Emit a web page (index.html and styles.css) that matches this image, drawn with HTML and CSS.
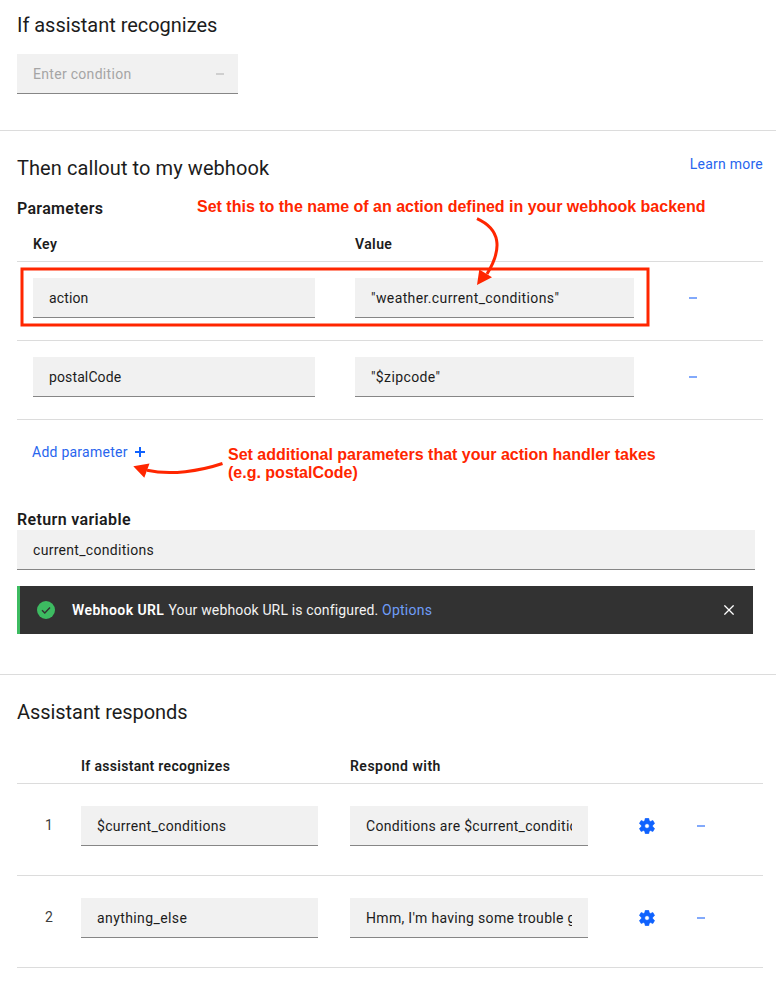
FILE: index.html
```html
<!DOCTYPE html>
<html lang="en">
<head>
<meta charset="utf-8">
<title>Webhook callout</title>
<link rel="stylesheet" href="styles.css">
</head>
<body>
<main class="panel">
  <section class="section condition">
    <h2 class="title">If assistant recognizes</h2>
    <div class="field field-condition"><span class="text placeholder">Enter condition</span><i class="minus minus-muted"></i></div>
  </section>

  <section class="section callout">
    <header class="callout-head">
      <h2 class="title title-callout">Then callout to my webhook</h2>
      <a class="link learn">Learn more</a>
    </header>
    <h3 class="subtitle">Parameters</h3>
    <div class="params-row params-header"><span class="th th-key">Key</span><span class="th th-value">Value</span></div>
    <div class="params-row">
      <div class="field"><span class="text t-action">action</span></div>
      <div class="field"><span class="text t-weather">"weather.current_conditions"</span></div>
      <i class="minus"></i>
    </div>
    <div class="params-row">
      <div class="field"><span class="text t-postal">postalCode</span></div>
      <div class="field"><span class="text t-zip">"$zipcode"</span></div>
      <i class="minus"></i>
    </div>
    <a class="link add">Add parameter
      <svg width="10" height="10" viewBox="0 0 10 10"><path d="M5 0V10M0 5H10" stroke="#0f62fe" stroke-width="2"/></svg>
    </a>
    <h3 class="subtitle subtitle-return">Return variable</h3>
    <div class="field field-return"><span class="text">current_conditions</span></div>
    <div class="notice">
      <svg class="notice-icon" width="18" height="18" viewBox="0 0 18 18"><circle cx="9" cy="9" r="9" fill="#3dbb61"/><path d="M5 9.2L7.8 12L13 6.6" fill="none" stroke="#323232" stroke-width="1.4"/></svg>
      <p class="notice-text"><strong class="notice-title">Webhook URL</strong><span class="notice-body">Your webhook URL is configured.</span><a class="notice-link">Options</a></p>
      <svg class="notice-close" width="10" height="10" viewBox="0 0 10 10"><path d="M.4 .4L9.6 9.6M9.6 .4L.4 9.6" stroke="#fff" stroke-width="1.3"/></svg>
    </div>
  </section>

  <section class="section responses">
    <h2 class="title title-responds">Assistant responds</h2>
    <div class="resp-row resp-header"><span></span><span class="th">If assistant recognizes</span><span class="th th-respond">Respond with</span></div>
    <div class="resp-row">
      <span class="num">1</span>
      <div class="field"><span class="text">$current_conditions</span></div>
      <div class="field"><span class="text">Conditions are $current_conditions</span></div>
      <svg class="gear" width="16" height="16" viewBox="-8 -8 16 16"><use href="#gear-shape"/></svg>
      <i class="minus"></i>
    </div>
    <div class="resp-row">
      <span class="num">2</span>
      <div class="field"><span class="text t-else">anything_else</span></div>
      <div class="field"><span class="text t-hmm">Hmm, I'm having some trouble getting</span></div>
      <svg class="gear" width="16" height="16" viewBox="-8 -8 16 16"><use href="#gear-shape"/></svg>
      <i class="minus"></i>
    </div>
  </section>

  <svg class="marks" width="776" height="984" viewBox="0 0 776 984">
    <defs>
      <g id="gear-shape">
        <path fill="#0f62fe" stroke="#0f62fe" stroke-width=".6" stroke-linejoin="round" fill-rule="evenodd" d="M-1.7-7.7H1.7L2.3-5.300L3.500-4.600L5.900-5.500L7.600-2.500L5.700-.8V.8L7.600 2.500L5.900 5.500L3.500 4.600L2.300 5.300L1.700 7.700H-1.700L-2.300 5.300L-3.500 4.600L-5.900 5.500L-7.600 2.500L-5.700 .8V-.8L-7.600-2.500L-5.900-5.500L-3.500-4.600L-2.300-5.300ZM0-2.300A2.300 2.300 0 1 0 0 2.300A2.300 2.300 0 1 0 0-2.300Z"/>
      </g>
    </defs>
    <g fill="none" stroke="#ff2600" stroke-width="3">
      <rect x="22" y="269" width="626" height="56"/>
      <path d="M477 218.6C500 229 503 248 487 274"/>
      <path d="M147 470.3C171 475.500 200 471 222.500 463.500"/>
    </g>
    <path fill="#ff2600" d="M477 285L479.300 269.500L492 277.300ZM133.300 466.300L149.500 463.500L144.300 477.800Z"/>
  </svg>
  <p class="note note-action">Set this to the name of an action defined in your webhook backend</p>
  <p class="note note-params">Set additional parameters that your action handler takes<br>(e.g. postalCode)</p>
</main>
</body>
</html>
```
FILE: styles.css
```css
* { box-sizing: border-box; }

body {
  margin: 0;
  background: #fff;
  color: #1c1c1c;
  font: 400 14px/20px Roboto, "Liberation Sans", sans-serif;
  letter-spacing: .3px;
}

h2, h3, p { margin: 0; }

.panel { position: relative; width: 776px; height: 984px; overflow: hidden; }
.section { padding-left: 17px; padding-right: 13px; }
.condition { height: 131px; padding-top: 12px; border-bottom: 1px solid #dcdcdc; }
.callout { height: 544px; padding-top: 24px; border-bottom: 1px solid #dcdcdc; }
.responses { padding-top: 24px; }

.title { font-size: 20px; line-height: 26px; font-weight: 400; letter-spacing: -.03px; }
.title-callout { letter-spacing: .08px; }
.title-responds { letter-spacing: -.06px; }
.subtitle { font-size: 16px; line-height: 22px; font-weight: 600; letter-spacing: .3px; margin-top: 17px; }

.field {
  height: 40px;
  padding: 0 16px;
  display: flex;
  align-items: center;
  background: #f1f1f1;
  border-bottom: 1px solid #868686;
  min-width: 0;
}
.text { flex: 1; overflow: hidden; white-space: nowrap; padding-top: 1px; }
.placeholder { color: #a5a5a5; }
.field-condition { width: 221px; margin-top: 16px; padding-right: 14px; }
.field-return { width: 738px; }

.minus { width: 8px; height: 2px; background: #82a9fb; }
.minus-muted { background: #cfcfcf; }

.link { color: #2865ee; }
.callout-head { display: flex; justify-content: space-between; }
.learn { margin-top: -1px; letter-spacing: .25px; }

.params-row {
  display: grid;
  grid-template-columns: 282px 279px 8px;
  column-gap: 40px;
  padding: 16px 0 0 16px;
  height: 79px;
  border-bottom: 1px solid #dcdcdc;
}
.params-row > .minus { margin: 19px 0 0 15px; }
.params-header { height: 42px; padding-top: 14px; }
.th { font-weight: 600; letter-spacing: .3px; }
.th-key, .th-value { letter-spacing: .4px; }
.th-respond { letter-spacing: .48px; }
.t-action, .t-postal { letter-spacing: .12px; }
.t-weather, .t-zip { letter-spacing: .38px; }
.t-else { letter-spacing: .4px; }
.t-hmm { letter-spacing: .31px; }

.add { display: flex; align-items: center; gap: 7px; margin: 22px 0 0 15px; letter-spacing: .25px; }
.subtitle-return { margin-top: 47px; margin-bottom: -1px; letter-spacing: .36px; }

.notice {
  width: 736px;
  height: 48px;
  margin-top: 16px;
  padding: 0 19px 0 17px;
  display: flex;
  align-items: center;
  background: #323232;
  border-left: 3px solid #3dbb61;
  color: #f3f3f3;
}
.notice-text { flex: 1; margin-left: 17px; display: flex; }
.notice-title { width: 96.500px; font-weight: 600; letter-spacing: .42px; color: #fff; }
.notice-body { width: 213.500px; letter-spacing: .15px; white-space: nowrap; }
.notice-link { color: #6f9df8; letter-spacing: .25px; }

.resp-row {
  display: grid;
  grid-template-columns: 64px 237px 32px 238px 51px 16px 42px 8px;
  padding-top: 22px;
  height: 92px;
  border-bottom: 1px solid #dcdcdc;
}
.resp-row > :nth-child(3) { grid-column: 4; }
.resp-row > .gear { grid-column: 6; margin-top: 12px; }
.resp-row > .minus { grid-column: 8; margin-top: 19px; }
.resp-header { height: 45px; margin-top: 14px; padding-top: 17px; }
.num { padding: 9px 0 0 28px; color: #3d3d3d; }

.marks { position: absolute; left: 0; top: 0; pointer-events: none; }
.note {
  position: absolute;
  color: #ff2600;
  font: 700 16px/18px "Liberation Sans", sans-serif;
  letter-spacing: 0;
  white-space: nowrap;
}
.note-action { left: 197px; top: 198px; }
.note-params { left: 228px; top: 446px; }
```
